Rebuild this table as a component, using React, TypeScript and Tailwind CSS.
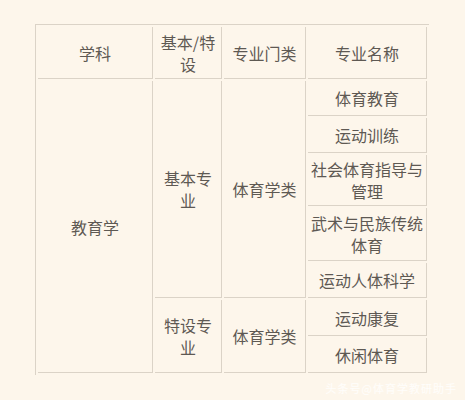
const font = { fontFamily: '"Noto Sans CJK SC", "Noto Sans", sans-serif' };

const cell = 'border-r border-b border-[#dbd3c7] text-center align-middle px-[3px] leading-[22px]';

// td heights exclude the 1px bottom border
const majors: { name: string; h: string }[] = [
  { name: '体育教育', h: 'h-[35px]' },
  { name: '运动训练', h: 'h-[35px]' },
  { name: '社会体育指导与管理', h: 'h-[51px]' },
  { name: '武术与民族传统体育', h: 'h-[53px]' },
  { name: '运动人体科学', h: 'h-[35px]' },
  { name: '运动康复', h: 'h-[36px]' },
  { name: '休闲体育', h: 'h-[35px]' },
];

export default function App() {
  return (
    <div className="w-[465px] h-[400px] bg-[#fdf6eb] overflow-hidden" style={font}>
      <div className="pt-[24px] pl-[35px]">
        <table className="table-fixed w-[394px] border-separate border-spacing-[2px] border-t border-l border-[#dbd3c7] text-[16px] text-[#5e5953]">
          <colgroup>
            <col className="w-[115px]" />
            <col className="w-[67px]" />
            <col className="w-[82px]" />
            <col className="w-[119px]" />
          </colgroup>
          <thead>
            <tr>
              <th className={`${cell} font-normal h-[52px]`}>学科</th>
              <th className={`${cell} font-normal`}>基本/特设</th>
              <th className={`${cell} font-normal`}>专业门类</th>
              <th className={`${cell} font-normal`}>专业名称</th>
            </tr>
          </thead>
          <tbody>
            {majors.map((m, i) => (
              <tr key={m.name}>
                {i === 0 && (
                  <td rowSpan={7} className={cell}>
                    教育学
                  </td>
                )}
                {i === 0 && (
                  <td rowSpan={5} className={cell}>
                    基本专业
                  </td>
                )}
                {i === 0 && (
                  <td rowSpan={5} className={cell}>
                    体育学类
                  </td>
                )}
                {i === 5 && (
                  <td rowSpan={2} className={cell}>
                    特设专业
                  </td>
                )}
                {i === 5 && (
                  <td rowSpan={2} className={cell}>
                    体育学类
                  </td>
                )}
                <td className={`${cell} ${m.h}`}>{m.name}</td>
              </tr>
            ))}
          </tbody>
        </table>
      </div>
      <div className="flex justify-end pr-[8px] mt-[6px]">
        <span className="text-[11px] leading-[14px] text-white/80 tracking-[1px]">头条号@体育学教研助手</span>
      </div>
    </div>
  );
}
